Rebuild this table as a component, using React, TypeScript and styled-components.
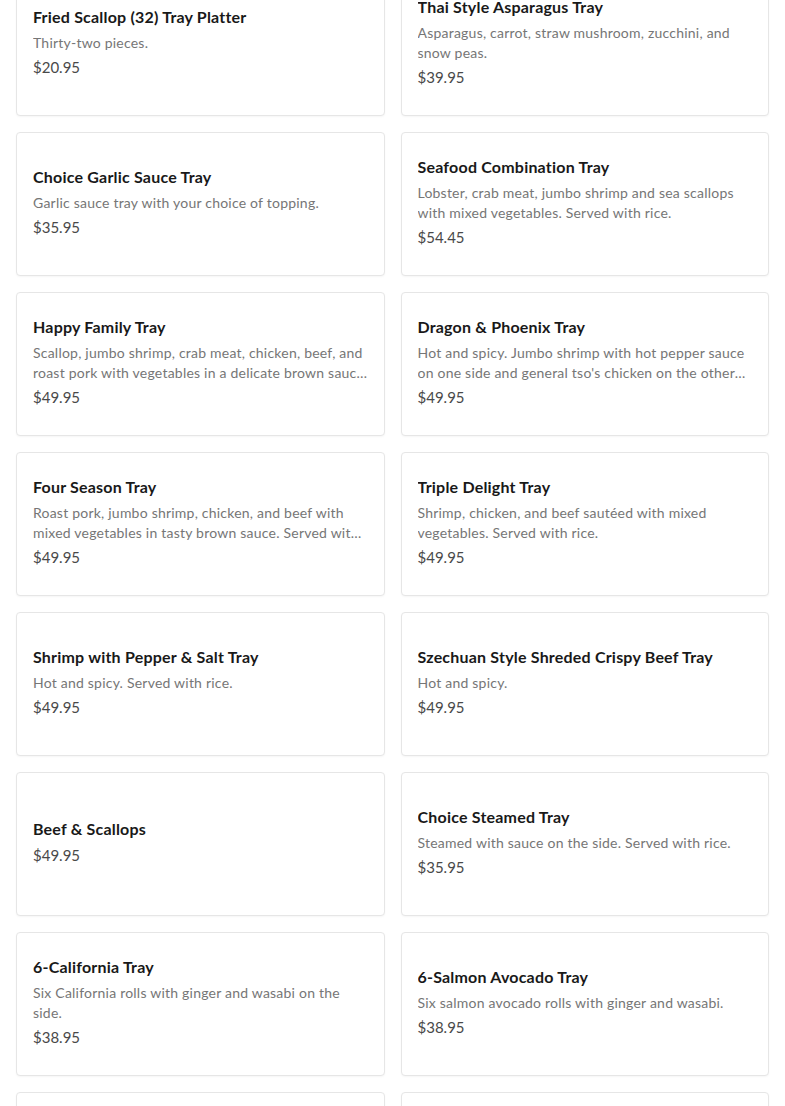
import styled, { createGlobalStyle } from 'styled-components';

type Item = {
    name: string;
    description?: string;
    price: string;
};

const items: Item[] = [
    {name: 'Fried Scallop (32) Tray Platter', description: 'Thirty-two pieces.', price: '$20.95'},
    {name: 'Thai Style Asparagus Tray', description: 'Asparagus, carrot, straw mushroom, zucchini, and snow peas.', price: '$39.95'},
    {name: 'Choice Garlic Sauce Tray', description: 'Garlic sauce tray with your choice of topping.', price: '$35.95'},
    {name: 'Seafood Combination Tray', description: 'Lobster, crab meat, jumbo shrimp and sea scallops with mixed vegetables. Served with rice.', price: '$54.45'},
    {name: 'Happy Family Tray', description: 'Scallop, jumbo shrimp, crab meat, chicken, beef, and roast pork with vegetables in a delicate brown sauce. Served with rice.', price: '$49.95'},
    {name: 'Dragon & Phoenix Tray', description: "Hot and spicy. Jumbo shrimp with hot pepper sauce on one side and general tso's chicken on the other side. Served with rice.", price: '$49.95'},
    {name: 'Four Season Tray', description: 'Roast pork, jumbo shrimp, chicken, and beef with mixed vegetables in tasty brown sauce. Served with rice.', price: '$49.95'},
    {name: 'Triple Delight Tray', description: 'Shrimp, chicken, and beef sautéed with mixed vegetables. Served with rice.', price: '$49.95'},
    {name: 'Shrimp with Pepper & Salt Tray', description: 'Hot and spicy. Served with rice.', price: '$49.95'},
    {name: 'Szechuan Style Shreded Crispy Beef Tray', description: 'Hot and spicy.', price: '$49.95'},
    {name: 'Beef & Scallops', price: '$49.95'},
    {name: 'Choice Steamed Tray', description: 'Steamed with sauce on the side. Served with rice.', price: '$35.95'},
    {name: '6-California Tray', description: 'Six California rolls with ginger and wasabi on the side.', price: '$38.95'},
    {name: '6-Salmon Avocado Tray', description: 'Six salmon avocado rolls with ginger and wasabi.', price: '$38.95'},
    {name: '6-Spicy Tuna Tray', description: 'Six spicy tuna rolls with ginger and wasabi.', price: '$38.95'},
    {name: '6-Eel Avocado Tray', description: 'Six eel avocado rolls with ginger and wasabi.', price: '$38.95'},
];

export default function App() {
    return (
        <>
            <GlobalStyle/>
            <Viewport>
                <MenuGrid>
                    {items.map((item) => (
                        <ItemCard key={item.name}>
                            <ItemName>{item.name}</ItemName>
                            {item.description && <ItemDescription>{item.description}</ItemDescription>}
                            <ItemPrice>{item.price}</ItemPrice>
                        </ItemCard>
                    ))}
                </MenuGrid>
            </Viewport>
        </>
    );
}

const GlobalStyle = createGlobalStyle`
    html, body {
        margin: 0;
        padding: 0;
        background: #ffffff;
    }

    body {
        font-family: Lato, "Noto Sans", Arial, sans-serif;
        -webkit-font-smoothing: antialiased;
    }
`;

const Viewport = styled.div`
    height: 1106px;
    overflow: hidden;
`;

const MenuGrid = styled.div`
    display: grid;
    grid-template-columns: 1fr 1fr;
    gap: 16px;
    padding: 0 16px;
    margin-top: -28px;
`;

const ItemCard = styled.div`
    box-sizing: border-box;
    height: 144px;
    display: flex;
    flex-direction: column;
    justify-content: center;
    padding: 12px 16px 16px;
    border: 1px solid #e6e6e6;
    border-radius: 4px;
    background: #ffffff;
    box-shadow: 0 1px 2px rgba(0, 0, 0, 0.04);
    overflow: hidden;
`;

const ItemName = styled.div`
    font-size: 16px;
    font-weight: 700;
    line-height: 24px;
    letter-spacing: 0.2px;
    color: #191919;
    white-space: nowrap;
    overflow: hidden;
    text-overflow: ellipsis;
`;

const ItemDescription = styled.div`
    margin-top: 4px;
    font-size: 14px;
    line-height: 20px;
    max-height: 40px;
    letter-spacing: 0.22px;
    color: #767676;
    display: -webkit-box;
    -webkit-line-clamp: 2;
    -webkit-box-orient: vertical;
    overflow: hidden;
`;

const ItemPrice = styled.div`
    margin-top: 2px;
    font-size: 15px;
    line-height: 24px;
    color: #494949;
`;
